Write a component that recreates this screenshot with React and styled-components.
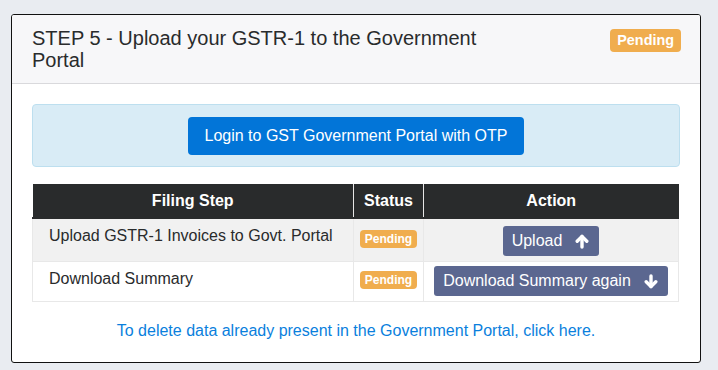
import styled, { createGlobalStyle } from "styled-components";

const GlobalStyle = createGlobalStyle`
	body {
		margin: 0;
		background: #e9ecf1;
		font-family: "Liberation Sans", Arial, sans-serif;
		color: #292b2c;
	}
`;

const Arrow = ({ down }) => (
	<svg viewBox='0 0 14 15' width='14' height='15'>
		<g
			fill='none'
			stroke='#fff'
			strokeWidth='3.4'
			strokeLinecap='round'
			strokeLinejoin='round'
			transform={down ? "rotate(180 7 7.5)" : undefined}
		>
			<path d='M7 13V2.5' />
			<path d='M2.2 7.2L7 2.4l4.8 4.8' />
		</g>
	</svg>
);

const rows = [
	{ step: "Upload GSTR-1 Invoices to Govt. Portal", action: "Upload", down: false, first: true },
	{ step: "Download Summary", action: "Download Summary again", down: true }
];

const App = () => {
	return (
		<>
			<GlobalStyle />
			<Page>
				<Card>
					<CardHeader>
						<Title>STEP 5 - Upload your GSTR-1 to the Government Portal</Title>
						<Badge $big>Pending</Badge>
					</CardHeader>
					<CardBody>
						<Alert>
							<PrimaryButton>Login to GST Government Portal with OTP</PrimaryButton>
						</Alert>
						<Table>
							<colgroup>
								<col style={{ width: 321 }} />
								<col style={{ width: 70 }} />
								<col />
							</colgroup>
							<thead>
								<tr>
									<Th>Filing Step</Th>
									<Th>Status</Th>
									<Th>Action</Th>
								</tr>
							</thead>
							<tbody>
								{rows.map((row) => (
									<Row key={row.step}>
										<StepCell>{row.step}</StepCell>
										<CenterCell>
											<Badge $first={row.first}>Pending</Badge>
										</CenterCell>
										<CenterCell>
											<ActionButton $first={row.first}>
												{row.action}
												<Arrow down={row.down} />
											</ActionButton>
										</CenterCell>
									</Row>
								))}
							</tbody>
						</Table>
						<DeleteLink href='#'>
							To delete data already present in the Government Portal, click here.
						</DeleteLink>
					</CardBody>
				</Card>
			</Page>
		</>
	);
};

const Page = styled.div`
	padding: 14px 0 8px 11px;
`;

const Card = styled.div`
	width: 688px;
	border: 1px solid #111;
	border-radius: 3px;
	background: #fff;
	overflow: hidden;
`;

const CardHeader = styled.div`
	display: flex;
	justify-content: space-between;
	align-items: flex-start;
	padding: 12px 19px 12px 20px;
	background: #f7f7f9;
	border-bottom: 1px solid #d9d9dc;
`;

const Title = styled.h5`
	margin: 0;
	max-width: 470px;
	font-size: 20px;
	font-weight: 400;
	line-height: 22px;
	color: #292b2c;
`;

const Badge = styled.span`
	display: inline-block;
	margin-top: ${(p) => (p.$big ? "2px" : p.$first ? "7px" : "5px")};
	padding: ${(p) => (p.$big ? "3px 7px" : "2px 5px")};
	font-size: ${(p) => (p.$big ? "14.4px" : "12px")};
	font-weight: 700;
	line-height: ${(p) => (p.$big ? "17px" : "14px")};
	color: #fff;
	background: #f0ad4e;
	border-radius: 4px;
`;

const CardBody = styled.div`
	padding: 20px 20px 19px;
`;

const Alert = styled.div`
	display: flex;
	justify-content: center;
	padding: 12px 12px 11px;
	margin-bottom: 17px;
	background: #d9ecf6;
	border: 1px solid #bddfef;
	border-radius: 4px;
`;

const PrimaryButton = styled.button`
	height: 38px;
	padding: 0 17px;
	font-family: inherit;
	font-size: 16px;
	color: #fff;
	background: #0275d8;
	border: none;
	border-radius: 4px;
`;

const Table = styled.table`
	width: 647px;
	border-collapse: collapse;
	table-layout: fixed;
	margin-bottom: 17px;
	font-size: 16px;
	line-height: 24px;
`;

const Th = styled.th`
	padding: 5px 8px 4px;
	font-weight: 700;
	color: #fff;
	background: #292b2c;
	border-left: 1px solid #e6e6e6;
	border-bottom: 2px solid #292b2c;

	&:first-child {
		border-left: none;
	}
`;

const Row = styled.tr`
	&:nth-child(odd) {
		background: #f1f1f1;
	}
`;

const StepCell = styled.td`
	padding: 5px 16px 4px;
	vertical-align: top;
	border: 1px solid #e8e8e8;
	color: #292b2c;
`;

const CenterCell = styled.td`
	padding: 4px 4px 5px;
	vertical-align: top;
	text-align: center;
	border: 1px solid #e8e8e8;
`;

const ActionButton = styled.button`
	display: inline-flex;
	align-items: center;
	gap: 13px;
	height: 30px;
	margin-top: ${(p) => (p.$first ? "3px" : "0")};
	padding: 0 10px 0 9px;
	font-family: inherit;
	font-size: 16px;
	color: #fff;
	background: #5b6790;
	border: none;
	border-radius: 3px;
`;

const DeleteLink = styled.a`
	display: block;
	text-align: center;
	font-size: 16px;
	line-height: 24px;
	color: #0a7fdd;
	text-decoration: none;
`;

export default App;
